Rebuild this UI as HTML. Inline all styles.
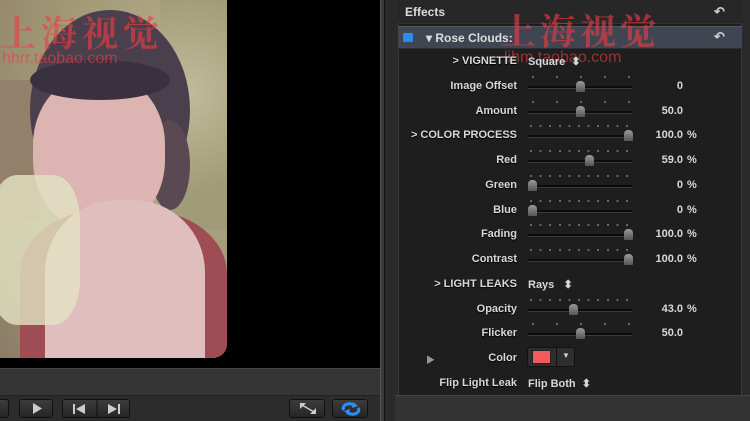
<!DOCTYPE html>
<html><head><meta charset="utf-8"><style>
*{margin:0;padding:0;box-sizing:border-box}
body{width:750px;height:421px;background:#000;position:relative;overflow:hidden;font-family:"Liberation Sans","Noto Sans CJK SC",sans-serif;font-weight:bold;font-size:11px;color:#d8d8d8}
.a{position:absolute}
.lbl{position:absolute;right:233px;text-align:right;white-space:nowrap;text-shadow:0 1px 1px #000}
.val{position:absolute;right:67px;text-align:right}
.pct{position:absolute;left:687px}
.trk{position:absolute;left:527px;width:106px;height:3px;background:#0c0c0c;border-bottom:1px solid #3a3a3a;border-radius:2px}
.th{position:absolute;width:9px;height:11px;background:linear-gradient(#999,#555);border-radius:4px 4px 1px 1px}
.dots{position:absolute;left:530px;height:2px;width:102px}
.dot{position:absolute;width:2px;height:2px;background:#666}
.btn{position:absolute;top:399px;height:19px;background:linear-gradient(#3c3c3c,#262626);border:1px solid #111;border-radius:3px}
.wm{position:absolute;color:rgba(235,60,70,.62);font-family:"Noto Serif CJK SC","Noto Sans CJK SC",serif;font-weight:bold}
</style></head><body>
<!-- photo -->
<div class="a" style="left:0;top:0;width:227px;height:358px;border-bottom-right-radius:14px;overflow:hidden;background:radial-gradient(ellipse at 80% 30%,#b8b290,#a09674 55%,#8c7c68)">
<div class="a" style="left:160px;top:0;width:67px;height:230px;background:radial-gradient(circle at 40% 40%,#c2bc9c,#9f9a78 70%);opacity:.9"></div>
<div class="a" style="left:0;top:80px;width:40px;height:140px;background:#94806a"></div>
<div class="a" style="left:30px;top:10px;width:160px;height:200px;border-radius:50%;background:#4a3f4c"></div>
<div class="a" style="left:150px;top:120px;width:40px;height:90px;border-radius:50%;background:#5a4852"></div>
<div class="a" style="left:33px;top:75px;width:132px;height:155px;border-radius:45%;background:#dcb4b2"></div>
<div class="a" style="left:30px;top:60px;width:140px;height:40px;border-radius:50%;background:#3a3140"></div>
<div class="a" style="left:20px;top:210px;width:207px;height:160px;border-radius:40% 40% 0 0;background:#9e4d55"></div>
<div class="a" style="left:45px;top:200px;width:160px;height:160px;border-radius:45% 45% 0 0;background:#e0bebd"></div>
<div class="a" style="left:-10px;top:175px;width:90px;height:150px;border-radius:30%;background:rgba(228,228,195,.8)"></div>
</div>
<div class="wm" style="left:0;top:6px;font-size:36px;letter-spacing:5px">上海视觉</div>
<div class="wm" style="left:2px;top:50px;font-size:16px;font-family:'Liberation Sans',sans-serif;font-weight:normal">hhrr.taobao.com</div>
<!-- left bottom bars -->
<div class="a" style="left:0;top:368px;width:380px;height:27px;background:#353535;border-top:1px solid #444"></div>
<div class="a" style="left:0;top:395px;width:380px;height:26px;background:#2c2c2c;border-top:1px solid #222"></div>
<div class="btn" style="left:-5px;width:14px"></div>
<div class="btn" style="left:19px;width:34px"><svg width="34" height="17"><path d="M13 3 L22 8.5 L13 14Z" fill="#ccc"/></svg></div>
<div class="btn" style="left:62px;width:68px"><svg width="68" height="17"><rect x="10" y="4" width="2" height="10" fill="#ccc"/><path d="M22 4 L13 9 L22 14Z" fill="#ccc"/><line x1="34" y1="0" x2="34" y2="17" stroke="#111"/><path d="M45 4 L54 9 L45 14Z" fill="#ccc"/><rect x="55" y="4" width="2" height="10" fill="#ccc"/></svg></div>
<div class="btn" style="left:289px;width:36px"><svg width="36" height="17"><path d="M10 3 L16 3 L10 9Z M26 14 L20 14 L26 8Z" fill="#ccc"/><path d="M12 5 L24 12" stroke="#ccc" stroke-width="1.5"/></svg></div>
<div class="btn" style="left:332px;width:36px"><svg width="36" height="17"><path d="M11 10 A6 4 0 0 1 22 6 M25 8 A6 4 0 0 1 14 12" stroke="#2f8cff" stroke-width="3" fill="none"/><path d="M20 2 L25 6 L19 8Z M16 15 L11 11 L17 9Z" fill="#2f8cff"/></svg></div>
<!-- divider -->
<div class="a" style="left:380px;top:0;width:5px;height:421px;background:#3a3a3a;border-left:1px solid #555;border-right:1px solid #111"></div>
<!-- right panel -->
<div class="a" style="left:385px;top:0;width:365px;height:421px;background:#2a2a2a"></div>
<div class="a" style="left:398px;top:0;width:344px;height:395px;background:#1e1e1e;border-left:1px solid #3a3a3a;border-right:1px solid #3a3a3a"></div>
<div class="a" style="left:398px;top:0;width:344px;height:24px;background:#272727;border-bottom:1px solid #333"></div>
<div class="a" style="left:405px;top:5px;font-size:12px;color:#ddd">Effects</div>
<div class="a" style="left:714px;top:4px;color:#ccc;font-size:13px">↶</div>
<div class="a" style="left:398px;top:26px;width:344px;height:23px;background:#3f4652;border-top:1px solid #505866;border-bottom:1px solid #2a2e35"></div>
<div class="a" style="left:403px;top:33px;width:10px;height:9px;background:#2a8cf0;border-radius:1px"></div>
<div class="a" style="left:426px;top:31px;font-size:12px;color:#ddd">▾ Rose Clouds:</div>
<div class="a" style="left:714px;top:29px;color:#ccc;font-size:13px">↶</div>
<div class="wm" style="left:500px;top:4px;font-size:36px;letter-spacing:4px">上海视觉</div>
<div class="wm" style="left:504px;top:49px;font-size:16px;font-family:'Liberation Sans',sans-serif;font-weight:normal">lihm.taobao.com</div>
<div class="a" style="left:395px;top:395px;width:355px;height:26px;background:#333;border-top:1px solid #444"></div>

<!-- rows -->
<div class="lbl" style="top:55px">&gt; VIGNETTE</div><div class="a" style="left:528px;top:55px">Square &nbsp;⬍</div>

<div class="lbl" style="top:80px">Image Offset</div>
<div class="dots" style="top:76px"><i class="dot" style="left:2px"></i><i class="dot" style="left:26px"></i><i class="dot" style="left:50px"></i><i class="dot" style="left:74px"></i><i class="dot" style="left:98px"></i></div>
<div class="trk" style="top:86px"></div><div class="th" style="left:576px;top:81px"></div><div class="val" style="top:80px">0</div>

<div class="lbl" style="top:105px">Amount</div>
<div class="dots" style="top:101px"><i class="dot" style="left:2px"></i><i class="dot" style="left:26px"></i><i class="dot" style="left:50px"></i><i class="dot" style="left:74px"></i><i class="dot" style="left:98px"></i></div>
<div class="trk" style="top:111px"></div><div class="th" style="left:576px;top:106px"></div><div class="val" style="top:105px">50.0</div>

<div class="lbl" style="top:129px">&gt; COLOR PROCESS</div>
<div class="dots" style="top:125px;background:repeating-linear-gradient(90deg,#666 0 2px,transparent 2px 9.6px)"></div>
<div class="trk" style="top:135px"></div><div class="th" style="left:624px;top:130px"></div><div class="val" style="top:129px">100.0</div><div class="pct" style="top:129px">%</div>

<div class="lbl" style="top:154px">Red</div>
<div class="dots" style="top:150px;background:repeating-linear-gradient(90deg,#666 0 2px,transparent 2px 9.6px)"></div>
<div class="trk" style="top:160px"></div><div class="th" style="left:585px;top:155px"></div><div class="val" style="top:154px">59.0</div><div class="pct" style="top:154px">%</div>

<div class="lbl" style="top:179px">Green</div>
<div class="dots" style="top:175px;background:repeating-linear-gradient(90deg,#666 0 2px,transparent 2px 9.6px)"></div>
<div class="trk" style="top:185px"></div><div class="th" style="left:528px;top:180px"></div><div class="val" style="top:179px">0</div><div class="pct" style="top:179px">%</div>

<div class="lbl" style="top:204px">Blue</div>
<div class="dots" style="top:200px;background:repeating-linear-gradient(90deg,#666 0 2px,transparent 2px 9.6px)"></div>
<div class="trk" style="top:210px"></div><div class="th" style="left:528px;top:205px"></div><div class="val" style="top:204px">0</div><div class="pct" style="top:204px">%</div>

<div class="lbl" style="top:228px">Fading</div>
<div class="dots" style="top:224px;background:repeating-linear-gradient(90deg,#666 0 2px,transparent 2px 9.6px)"></div>
<div class="trk" style="top:234px"></div><div class="th" style="left:624px;top:229px"></div><div class="val" style="top:228px">100.0</div><div class="pct" style="top:228px">%</div>

<div class="lbl" style="top:253px">Contrast</div>
<div class="dots" style="top:249px;background:repeating-linear-gradient(90deg,#666 0 2px,transparent 2px 9.6px)"></div>
<div class="trk" style="top:259px"></div><div class="th" style="left:624px;top:254px"></div><div class="val" style="top:253px">100.0</div><div class="pct" style="top:253px">%</div>

<div class="lbl" style="top:278px">&gt; LIGHT LEAKS</div><div class="a" style="left:528px;top:278px">Rays &nbsp;&nbsp;⬍</div>

<div class="lbl" style="top:303px">Opacity</div>
<div class="dots" style="top:299px;background:repeating-linear-gradient(90deg,#666 0 2px,transparent 2px 9.6px)"></div>
<div class="trk" style="top:309px"></div><div class="th" style="left:569px;top:304px"></div><div class="val" style="top:303px">43.0</div><div class="pct" style="top:303px">%</div>

<div class="lbl" style="top:327px">Flicker</div>
<div class="dots" style="top:323px"><i class="dot" style="left:2px"></i><i class="dot" style="left:26px"></i><i class="dot" style="left:50px"></i><i class="dot" style="left:74px"></i><i class="dot" style="left:98px"></i></div>
<div class="trk" style="top:333px"></div><div class="th" style="left:576px;top:328px"></div><div class="val" style="top:327px">50.0</div>

<div class="a" style="left:426px;top:353px;font-size:9px;color:#999">▶</div>
<div class="lbl" style="top:352px">Color</div>
<div class="a" style="left:527px;top:347px;width:48px;height:20px;background:#2e2e2e;border:1px solid #111;border-radius:3px"></div>
<div class="a" style="left:532px;top:350px;width:19px;height:14px;background:#f45a5a;border:1px solid #222"></div>
<div class="a" style="left:556px;top:346px;width:1px;height:20px;background:#111"></div>
<div class="a" style="left:562px;top:351px;font-size:8px;color:#ccc">▼</div>

<div class="lbl" style="top:377px">Flip Light Leak</div><div class="a" style="left:528px;top:377px">Flip Both &nbsp;⬍</div>
</body></html>
